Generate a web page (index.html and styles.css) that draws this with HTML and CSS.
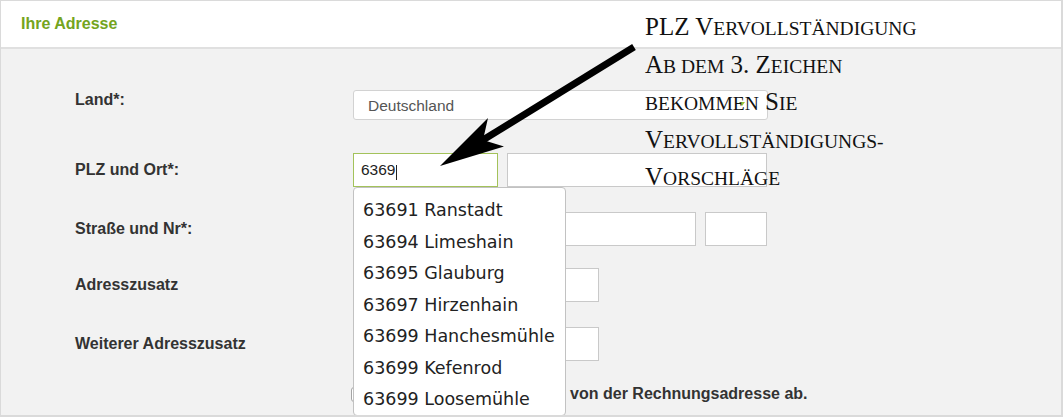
FILE: index.html
```html
<!DOCTYPE html>
<html lang="de">
<head>
    <meta charset="UTF-8">
    <meta name="viewport" content="width=device-width, initial-scale=1.0">
    <title>Ihre Adresse</title>
    <link rel="stylesheet" href="styles.css">
</head>
<body>
    <div class="panel">
        <div class="panel-header">
            <h2>Ihre Adresse</h2>
        </div>

        <form class="address-form">
            <div class="form-row row-land">
                <label class="field-label">Land*:</label>
                <div class="select-wrap">
                    <select class="select">
                        <option>Deutschland</option>
                    </select>
                </div>
            </div>

            <div class="form-row row-plz">
                <label class="field-label">PLZ und Ort*:</label>
                <div class="field-group">
                    <div class="plz-wrap">
                        <input class="input input-plz is-active" type="text" value="6369">
                        <span class="caret"></span>
                        <ul class="suggestions">
                            <li>63691 Ranstadt</li>
                            <li>63694 Limeshain</li>
                            <li>63695 Glauburg</li>
                            <li>63697 Hirzenhain</li>
                            <li>63699 Hanchesmühle</li>
                            <li>63699 Kefenrod</li>
                            <li>63699 Loosemühle</li>
                        </ul>
                    </div>
                    <input class="input input-city" type="text">
                </div>
            </div>

            <div class="form-row row-street">
                <label class="field-label">Straße und Nr*:</label>
                <div class="field-group">
                    <input class="input input-street" type="text">
                    <input class="input input-nr" type="text">
                </div>
            </div>

            <div class="form-row row-extra">
                <label class="field-label">Adresszusatz</label>
                <input class="input input-extra" type="text">
            </div>

            <div class="form-row row-extra2">
                <label class="field-label">Weiterer Adresszusatz</label>
                <input class="input input-extra" type="text">
            </div>

            <div class="form-row row-check">
                <label class="check-label">
                    <input class="checkbox" type="checkbox">
                    <span class="check-text">Die Lieferadresse weicht von der Rechnungsadresse ab.</span>
                </label>
            </div>
        </form>

        <!-- Hinweis -->
        <div class="annotation">
            <p>PLZ V<span class="sc">ervollständigung</span></p>
            <p>A<span class="sc">b dem</span> 3. Z<span class="sc">eichen</span></p>
            <p><span class="sc">bekommen</span> S<span class="sc">ie</span></p>
            <p>V<span class="sc">ervollständigungs-</span></p>
            <p>V<span class="sc">orschläge</span></p>
        </div>

        <svg class="arrow" viewBox="0 0 1063 417" width="1063" height="417">
            <line x1="634" y1="47" x2="478" y2="143" stroke="#000" stroke-width="7"/>
            <polygon points="440,166 488,118 483,140 504,146.5" fill="#000"/>
        </svg>
    </div>
</body>
</html>
```

FILE: styles.css
```css
:root {
    --green: #74a420;
    --green-border: #a3c25a;
    --border: #c9c9c9;
    --bg: #f2f2f2;
    --text: #333;
}

body {
    margin: 0;
    font-family: "Liberation Sans", Arial, sans-serif;
    background: #fff;
}

.panel {
    position: relative;
    width: 1063px;
    height: 417px;
    box-sizing: border-box;
    border: 1px solid #dadada;
    border-right-width: 2px;
    border-bottom-width: 2px;
    background: var(--bg);
    overflow: hidden;
}

.panel-header {
    height: 46px;
    padding-left: 20px;
    background: #fff;
    border-bottom: 2px solid #e0e0e0;
}

.panel-header h2 {
    margin: 0;
    font-size: 16px;
    line-height: 46px;
    font-weight: bold;
    color: var(--green);
}

.address-form {
    padding: 41px 0 0 74px;
}

.form-row {
    display: flex;
    align-items: center;
}

.row-plz {
    margin-top: 33px;
}

.row-street {
    margin-top: 25px;
}

.row-extra {
    margin-top: 22px;
}

.row-extra2 {
    margin-top: 25px;
}

.row-check {
    margin-top: 24px;
}

.field-label {
    width: 278px;
    flex-shrink: 0;
    font-size: 16px;
    line-height: 18px;
    font-weight: bold;
    color: var(--text);
}

.row-land .field-label {
    align-self: flex-start;
    margin-top: 1px;
}

.select-wrap {
    position: relative;
    width: 415px;
}

.select-wrap::after {
    content: "";
    position: absolute;
    right: 23px;
    top: 12px;
    border-left: 3px solid transparent;
    border-right: 3px solid transparent;
    border-top: 4px solid #9cbf3c;
}

.select {
    appearance: none;
    -webkit-appearance: none;
    width: 100%;
    height: 30px;
    padding: 0 0 0 14px;
    border: 1px solid #d2d2d2;
    border-radius: 3px;
    background: #fff;
    font-family: "Liberation Sans", Arial, sans-serif;
    font-size: 15.5px;
    color: #555;
}

.field-group {
    display: flex;
    gap: 9px;
}

.input {
    box-sizing: border-box;
    height: 34px;
    margin: 0;
    padding: 0 7px;
    border: 1px solid var(--border);
    border-radius: 0;
    background: #fff;
    font-family: "Liberation Sans", Arial, sans-serif;
    font-size: 15.5px;
    color: #222;
    outline: none;
}

.input.is-active {
    border-color: var(--green-border);
}

.plz-wrap {
    position: relative;
}

.input-plz {
    width: 145px;
}

.input-city {
    width: 260px;
}

.input-street {
    width: 343px;
}

.input-nr {
    width: 62px;
}

.input-extra {
    width: 246px;
}

.caret {
    position: absolute;
    left: 43px;
    top: 12px;
    width: 1px;
    height: 15px;
    background: #222;
}

.suggestions {
    position: absolute;
    top: 100%;
    left: 0;
    z-index: 2;
    box-sizing: border-box;
    width: 213px;
    height: 229px;
    margin: 0;
    padding: 7px 0 0 9px;
    list-style: none;
    background: #fff;
    border: 1px solid #c2c2c2;
    border-radius: 4px;
    font-family: "DejaVu Sans", Verdana, sans-serif;
    font-size: 17.5px;
    line-height: 31.5px;
    color: #222;
    white-space: nowrap;
}

.check-label {
    display: flex;
    align-items: center;
    padding-left: 276px;
    font-size: 16px;
    line-height: 18px;
    font-weight: bold;
    color: var(--text);
}

.checkbox {
    appearance: none;
    -webkit-appearance: none;
    flex-shrink: 0;
    width: 15px;
    height: 15px;
    margin: 0 12px 0 0;
    border: 1px solid #a5a5a5;
    border-radius: 3px;
    background: #fff;
}

.check-text {
    white-space: nowrap;
}

.annotation {
    position: absolute;
    left: 644px;
    top: 7px;
    z-index: 3;
    font-family: "Liberation Serif", "Times New Roman", serif;
    font-size: 25px;
    line-height: 37.5px;
    color: #111;
}

.annotation p {
    margin: 0;
    white-space: nowrap;
}

.sc {
    font-size: 0.78em;
    line-height: 1;
    text-transform: uppercase;
}

.arrow {
    position: absolute;
    left: -1px;
    top: -1px;
    z-index: 4;
    pointer-events: none;
}
```
